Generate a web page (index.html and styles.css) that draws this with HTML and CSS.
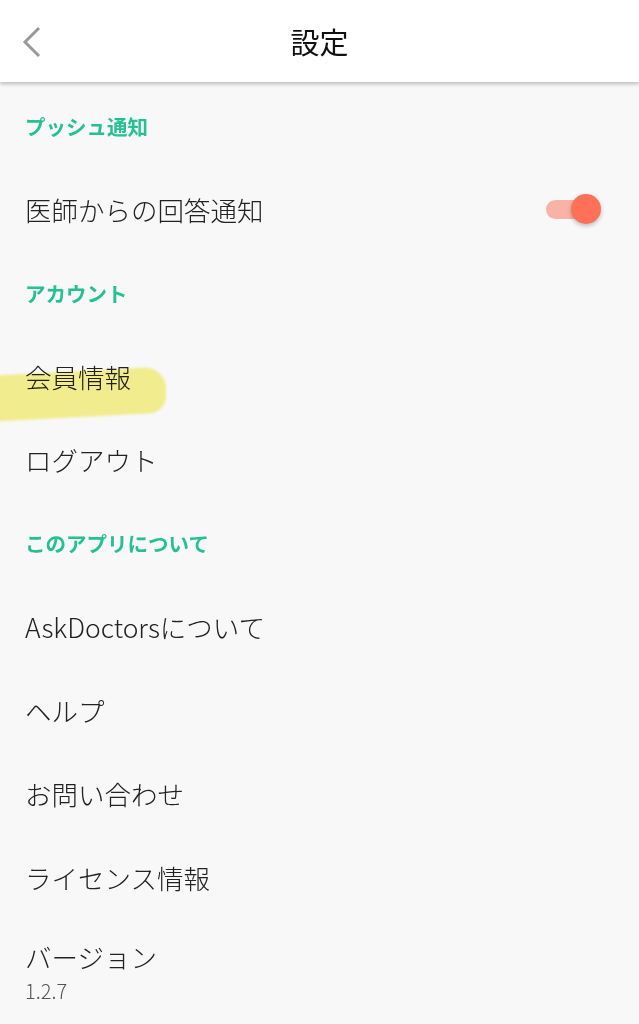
FILE: index.html
```html
<!DOCTYPE html>
<html lang="ja">
<head>
  <meta charset="UTF-8">
  <title>設定</title>
  <link rel="stylesheet" href="styles.css">
</head>
<body>
  <header class="topbar">
    <button class="back-btn" aria-label="戻る">
      <svg width="20" height="32" viewBox="0 0 20 32"><polyline points="17,2 3,16 17,30" fill="none" stroke="#9a9a9a" stroke-width="3"/></svg>
    </button>
    <h1 class="title">設定</h1>
  </header>

  <main class="settings">
    <div class="section-title">プッシュ通知</div>
    <div class="row">
      <span>医師からの回答通知</span>
      <div class="toggle on"><div class="knob"></div></div>
    </div>

    <div class="section-title">アカウント</div>
    <div class="row marked">
      <span>会員情報</span>
      <div class="marker"></div>
    </div>
    <div class="row">ログアウト</div>

    <div class="section-title">このアプリについて</div>
    <div class="row">AskDoctorsについて</div>
    <div class="row">ヘルプ</div>
    <div class="row">お問い合わせ</div>
    <div class="row">ライセンス情報</div>
    <div class="row version">
      <span>バージョン</span>
      <span class="version-no">1.2.7</span>
    </div>
  </main>
</body>
</html>
```

FILE: styles.css
```css
body {
  margin: 0;
  background-color: #f8f8f8;
  font-family: "Noto Sans CJK JP", "Noto Sans", sans-serif;
  color: #222;
  overflow: hidden;
}
.topbar {
  height: 82px;
  background-color: #fff;
  display: flex;
  align-items: center;
  justify-content: center;
  position: relative;
  box-shadow: 0 2px 4px rgba(0,0,0,0.25);
  z-index: 1;
}
.back-btn {
  position: absolute;
  left: 22px;
  top: 26px;
  border: none;
  background: none;
  padding: 0;
}
.title {
  margin: 0;
  font-size: 29px;
  font-weight: 400;
  color: #111;
}
.settings {
  padding-top: 2px;
}
.section-title,
.row {
  height: 83.5px;
  display: flex;
  align-items: center;
  padding: 0 25px;
}
.section-title {
  font-size: 20.5px;
  font-weight: 700;
  color: #25c193;
}
.row {
  font-size: 26.5px;
  font-weight: 300;
  justify-content: space-between;
}
.marked {
  position: relative;
}
.marker {
  position: absolute;
  left: -4px;
  top: 36px;
  width: 170px;
  height: 46px;
  background-color: rgba(245, 240, 100, 0.7);
  border-radius: 4px 22px 16px 2px;
  transform: skewY(-3deg);
  mix-blend-mode: multiply;
  filter: blur(1px);
}
.toggle {
  width: 46px;
  height: 19px;
  border-radius: 10px;
  background-color: #f9b2a6;
  position: relative;
  margin-right: 22px;
}
.knob {
  position: absolute;
  right: -9px;
  top: -6px;
  width: 30px;
  height: 30px;
  border-radius: 50%;
  background-color: #ff7058;
  box-shadow: 0 2px 4px rgba(0,0,0,0.25);
}
.version {
  flex-direction: column;
  align-items: flex-start;
  justify-content: flex-start;
  padding-top: 18px;
  height: auto;
}
.version-no {
  font-size: 20px;
  color: #555;
  margin-top: 0;
}
```
